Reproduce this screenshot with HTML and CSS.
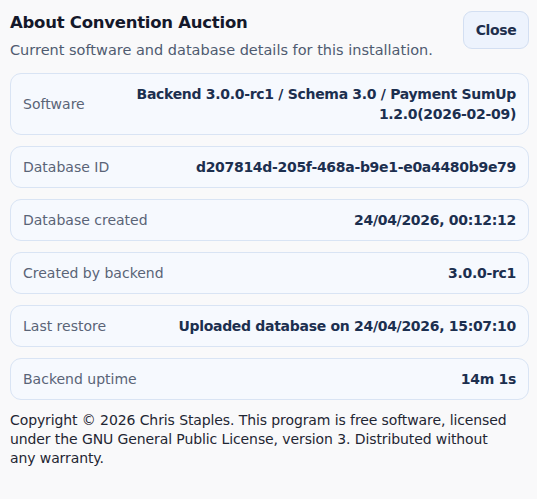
FILE: index.html
```html
<!DOCTYPE html>
<html lang="en">
<head>
<meta charset="utf-8">
<title>About Convention Auction</title>
<link rel="stylesheet" href="styles.css">
</head>
<body>
<div class="dialog">
  <header class="head">
    <div class="head-text">
      <h1 class="title">About Convention Auction</h1>
      <p class="subtitle">Current software and database details for this installation.</p>
    </div>
    <button class="close">Close</button>
  </header>
  <div class="rows">
    <div class="row"><span class="label">Software</span><span class="value">Backend 3.0.0-rc1 / Schema 3.0 / Payment SumUp 1.2.0(2026-02-09)</span></div>
    <div class="row"><span class="label">Database ID</span><span class="value">d207814d-205f-468a-b9e1-e0a4480b9e79</span></div>
    <div class="row"><span class="label">Database created</span><span class="value">24/04/2026, 00:12:12</span></div>
    <div class="row"><span class="label">Created by backend</span><span class="value">3.0.0-rc1</span></div>
    <div class="row"><span class="label">Last restore</span><span class="value">Uploaded database on 24/04/2026, 15:07:10</span></div>
    <div class="row"><span class="label">Backend uptime</span><span class="value">14m 1s</span></div>
  </div>
  <p class="footer">Copyright © 2026 Chris Staples. This program is free software, licensed under the GNU General Public License, version 3. Distributed without any warranty.</p>
</div>
</body>
</html>
```
FILE: styles.css
```css
* { box-sizing: border-box; }
html, body { margin: 0; padding: 0; }
body {
  background: #f9f9fa;
  font-family: "DejaVu Sans", Verdana, sans-serif;
}
.dialog {
  padding: 11px 8px 0 10px;
}
.head {
  display: flex;
  justify-content: space-between;
  align-items: flex-start;
}
.title {
  margin: 0;
  padding-top: 1px;
  font-size: 16.5px;
  letter-spacing: -0.25px;
  font-weight: bold;
  color: #14182a;
  line-height: 22px;
}
.subtitle {
  margin: 6px 0 0;
  font-size: 14.5px;
  color: #4f5b70;
  line-height: 20px;
}
.close {
  width: 66px;
  height: 38px;
  border: 1px solid #d3dff2;
  border-radius: 9px;
  background: #edf3fd;
  color: #1e2f4d;
  font-family: inherit;
  font-weight: bold;
  font-size: 14px;
  letter-spacing: -0.4px;
  padding: 0;
}
.rows {
  margin-top: 13px;
  display: flex;
  flex-direction: column;
  gap: 11px;
}
.row {
  display: grid;
  grid-template-columns: 100px 1fr;
  gap: 12px;
  align-items: center;
  padding: 10px 12px;
  border: 1px solid #d9e4f4;
  border-radius: 11px;
  background: #f6f9fe;
  line-height: 20px;
  font-size: 14px;
}
.label { color: #5a6477; white-space: nowrap; }
.value { color: #1c2f4f; font-weight: bold; text-align: right; letter-spacing: -0.3px; }
.footer {
  margin: 11px 14px 0 0;
  font-size: 14px;
  letter-spacing: -0.1px;
  line-height: 19px;
  color: #1f2633;
}
```
